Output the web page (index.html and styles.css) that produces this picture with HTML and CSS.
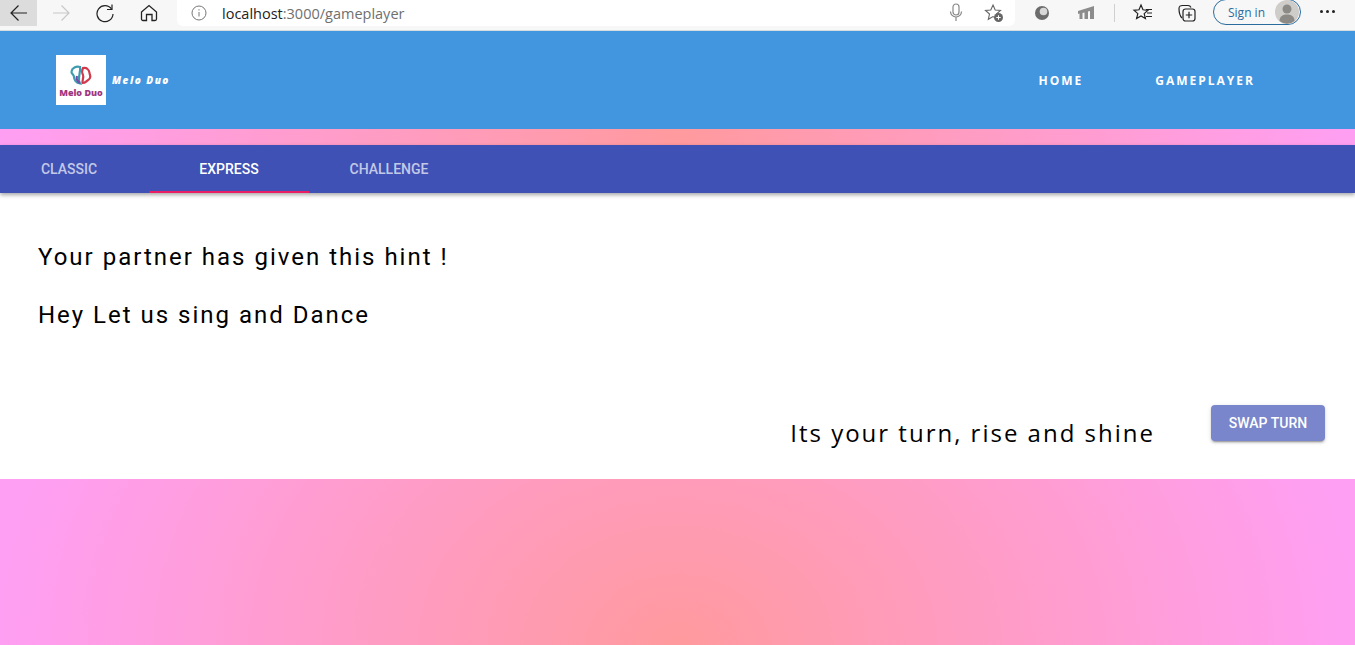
FILE: index.html
```html
<!DOCTYPE html>
<html lang="en">
<head>
<meta charset="UTF-8" />
<meta name="viewport" content="width=device-width, initial-scale=1" />
<title>Melo Duo - Gameplayer</title>
<link rel="stylesheet" href="styles.css">
</head>
<body>
<div class="browser-bar">
  <div class="tool tool-back">
    <svg width="20" height="20" viewBox="0 0 20 20" fill="none" stroke="#222" stroke-width="1.2"><path d="M18 10H2M9.5 2.5 2 10l7.5 7.5"/></svg>
  </div>
  <div class="tool tool-fwd">
    <svg width="20" height="20" viewBox="0 0 20 20" fill="none" stroke="#c8c8c8" stroke-width="1.2"><path d="M2 10h16M10.500 2.500 18 10l-7.500 7.500"/></svg>
  </div>
  <div class="tool">
    <svg width="20" height="20" viewBox="0 0 20 20" fill="none" stroke="#222" stroke-width="1.2"><path d="M16.500 6A8 8 0 1 0 18 11"/><path d="M17 1.500V6.500H12"/></svg>
  </div>
  <div class="tool">
    <svg width="20" height="20" viewBox="0 0 20 20" fill="none" stroke="#222" stroke-width="1.3"><path d="M2.500 9 10 2.500 17.500 9v7a1.500 1.500 0 0 1-1.500 1.500h-3V11.500H7.500v6H4A1.500 1.500 0 0 1 2.500 16z"/></svg>
  </div>
  <div class="address">
    <svg class="addr-info" width="16" height="16" viewBox="0 0 16 16" fill="none" stroke="#777" stroke-width="1"><circle cx="8" cy="8" r="7"/><path d="M8 7v4.500M8 4.200v1.300"/></svg>
    <span class="url"><span class="url-host">localhost</span>:3000/gameplayer</span>
    <svg class="addr-mic" width="16" height="20" viewBox="0 0 16 20" fill="none" stroke="#888" stroke-width="1.2"><rect x="5" y="1" width="6" height="11" rx="3"/><path d="M2.500 8.500a5.500 5.500 0 0 0 11 0M8 14v4"/></svg>
    <svg class="addr-star" width="20" height="20" viewBox="0 0 20 20"><path d="M9 2l2.200 5 5.300.5-4 3.500 1.200 5.300L9 13.600 4.300 16.300 5.500 11l-4-3.500L6.800 7z" fill="none" stroke="#666" stroke-width="1.100"/><circle cx="14.500" cy="14.500" r="4.500" fill="#666"/><path d="M12.300 14.500h4.400M14.500 12.300v4.400" stroke="#fff" stroke-width="1"/></svg>
  </div>
  <div class="tool tool-first">
    <svg width="20" height="20" viewBox="0 0 20 20"><circle cx="10" cy="10" r="7" fill="#6c6c6c"/><circle cx="11.500" cy="8.500" r="3.800" fill="#d8d8d8"/></svg>
  </div>
  <div class="tool">
    <svg width="20" height="20" viewBox="0 0 20 20" fill="#8c8c8c"><path d="M2 8l16-5v13h-4V8l-2 .6V16H8.500V9.500L6.500 10v6H3.500v-5.500L2 11z"/></svg>
  </div>
  <div class="tool-sep"></div>
  <div class="tool">
    <svg width="22" height="20" viewBox="0 0 22 20" fill="none" stroke="#222" stroke-width="1.200"><path d="M9 2l2 4.800 5 .5-3.800 3.300 1.200 5L9 13 4.600 15.600l1.200-5L2 7.300l5-.5z"/><path d="M14 6.500h6M15 10h5M14 13.500h6"/></svg>
  </div>
  <div class="tool">
    <svg width="20" height="20" viewBox="0 0 20 20" fill="none" stroke="#222" stroke-width="1.200"><path d="M5 15C3 13 2 8 2 5.500 2 3.500 3.500 2.500 5.500 2.500H11c1.500 0 2.500.8 3 2"/><rect x="6" y="6" width="12" height="12" rx="2.500"/><path d="M12 8.800v6.400M8.800 12h6.400"/></svg>
  </div>
  <div class="signin">
    <span>Sign in</span>
    <svg class="avatar" width="24" height="24" viewBox="0 0 24 24"><circle cx="12" cy="12" r="12" fill="#cfcdca"/><circle cx="12" cy="9" r="4.500" fill="#8c8a87"/><path d="M4.500 21c0-5 3.500-6.500 7.500-6.500s7.500 1.500 7.500 6.500a12 12 0 0 1-15 0z" fill="#8c8a87"/></svg>
  </div>
  <div class="tool-more"><i></i><i></i><i></i></div>
</div>

<header class="app-header">
  <div class="logo-box">
    <svg width="24" height="22" viewBox="0 0 24 22" fill="none" stroke-width="2.200">
      <path d="M11 2C7 1 3 3 2.500 6.500 2 9 5 9.500 5 12s2 6 6 6.500C8 14 12 7 11 2z" stroke="#3f9cb0"/>
      <path d="M8 11c-1 3 .5 5.500 3 7" stroke="#7a4bab"/>
      <path d="M14 3c-1.500 3-1 5 0 7s-1 6-.5 8c3 0 3.500-1.500 5-2.500s3.500-3 2.500-5.500 0-4-2.500-6c-1.500-1.500-3-1-4.500-1z" stroke="#d23a4c"/>
    </svg>
    <span class="logo-box-text">Melo Duo</span>
  </div>
  <span class="brand">Melo Duo</span>
  <nav class="main-nav">
    <a href="#">Home</a>
    <a href="#">Gameplayer</a>
  </nav>
</header>

<div class="strip"></div>

<div class="tabs">
  <div class="tab">Classic</div>
  <div class="tab active">Express</div>
  <div class="tab">Challenge</div>
</div>

<main class="game">
  <h5 class="hint">Your partner has given this hint !</h5>
  <h5 class="hint">Hey Let us sing and Dance</h5>
  <div class="turn-row">
    <span class="turn-text">Its your turn, rise and shine</span>
    <button class="swap-btn">Swap Turn</button>
  </div>
</main>

<div class="page-bottom"></div>
</body>
</html>
```

FILE: styles.css
```css
html, body {
  margin: 0;
  padding: 0;
  height: 100%;
}
body {
  display: flex;
  flex-direction: column;
  height: 645px;
  overflow: hidden;
  font-family: Roboto, sans-serif;
  background: #fff;
}

/* browser chrome */
.browser-bar {
  display: flex;
  align-items: flex-start;
  height: 30px;
  flex: none;
  background: #f7f7f7;
  border-bottom: 1px solid #d4dce4;
}
.tool {
  width: 44px;
  height: 26px;
  display: flex;
  align-items: center;
  justify-content: center;
  flex: none;
}
.tool-back {
  width: 37px;
  background: #dcdcdc;
}
.tool-fwd {
  margin-left: 2px;
}
.tool-first {
  margin-left: 5px;
}
.tool-sep {
  width: 1px;
  height: 18px;
  margin: 4px 6px 0;
  background: #d0d0d0;
}
.address {
  display: flex;
  align-items: center;
  width: 838px;
  height: 26px;
  margin-left: 6px;
  background: #fff;
  border-radius: 0 0 6px 6px;
  flex: none;
}
.addr-info {
  margin-left: 14px;
}
.url {
  margin-left: 15px;
  font-family: "Open Sans", sans-serif;
  font-size: 14.500px;
  color: #6f6f6f;
}
.url-host {
  color: #222;
}
.addr-mic {
  margin-left: auto;
}
.addr-star {
  margin: 0 11px 0 20px;
}
.signin {
  display: flex;
  align-items: center;
  justify-content: space-between;
  box-sizing: border-box;
  width: 88px;
  height: 26px;
  margin: -1px 0 0 4px;
  padding: 0 1px 0 14px;
  border: 1px solid #2a6c9e;
  border-radius: 14px;
  font-family: "Open Sans", sans-serif;
  font-size: 12px;
  color: #2a6c9e;
}
.tool-more {
  display: flex;
  gap: 3px;
  justify-content: center;
  width: 52px;
  margin-top: 10px;
}
.tool-more i {
  width: 3px;
  height: 3px;
  border-radius: 50%;
  background: #222;
}

/* app header */
.app-header {
  display: flex;
  align-items: center;
  flex: none;
  height: 98px;
  padding: 0 100px 0 56px;
  background: #4296e0;
  color: #fff;
}
.logo-box {
  display: flex;
  flex-direction: column;
  align-items: center;
  justify-content: center;
  width: 50px;
  height: 50px;
  padding-top: 4px;
  box-sizing: border-box;
  background: #fff;
}
.logo-box-text {
  font-family: "Open Sans", sans-serif;
  font-size: 9px;
  font-weight: 800;
  line-height: 12px;
  white-space: nowrap;
  color: #a0367f;
}
.brand {
  margin-left: 6px;
  font-family: "Open Sans", sans-serif;
  font-size: 10px;
  font-weight: 800;
  font-style: italic;
  letter-spacing: 1.500px;
}
.main-nav {
  display: flex;
  gap: 72px;
  margin-left: auto;
}
.main-nav a {
  font-family: "Open Sans", sans-serif;
  font-size: 12px;
  font-weight: 700;
  letter-spacing: 2px;
  text-transform: uppercase;
  text-decoration: none;
  color: #fff;
}

/* gradient bits */
.strip {
  height: 16px;
  flex: none;
  background: linear-gradient(90deg, #ff9ff3, #ff9a9e 50%, #ff9ff3);
}
.page-bottom {
  height: 166px;
  flex: none;
  background: radial-gradient(ellipse 680px 520px at 50% 100%, #ff9a9e, #ff9ff3);
}

/* tabs */
.tabs {
  display: flex;
  flex: none;
  height: 48px;
  padding-left: 0;
  background: #3f51b5;
  box-shadow: 0 2px 4px rgba(0,0,0,0.35);
  position: relative;
}
.tab {
  display: flex;
  align-items: center;
  justify-content: center;
  box-sizing: border-box;
  width: 160px;
  font-size: 14px;
  font-weight: 500;
  text-transform: uppercase;
  color: rgba(255,255,255,0.7);
}
.tab:first-child {
  margin-left: -11px;
}
.tab.active {
  color: #fff;
  border-bottom: 2px solid #e91e63;
  padding-top: 2px;
}

/* game area */
.game {
  display: flex;
  flex-direction: column;
  flex: 1;
  padding: 48px 30px 30px 38px;
}
.hint {
  margin: 0 0 26px;
  font-size: 24px;
  font-weight: 400;
  line-height: 32px;
  letter-spacing: 2px;
  color: #000;
}
.turn-row {
  display: flex;
  align-items: center;
  justify-content: flex-end;
  gap: 56px;
  margin-top: auto;
}
.turn-text {
  margin-top: 20px;
  font-family: "Open Sans", sans-serif;
  font-size: 24px;
  letter-spacing: 2px;
  color: #000;
}
.swap-btn {
  width: 114px;
  height: 36px;
  border: none;
  border-radius: 4px;
  background: #7986cb;
  box-shadow: 0 3px 1px -2px rgba(0,0,0,0.2), 0 2px 2px 0 rgba(0,0,0,0.14), 0 1px 5px 0 rgba(0,0,0,0.12);
  font-family: Roboto, sans-serif;
  font-size: 14px;
  font-weight: 500;
  text-transform: uppercase;
  color: #fff;
}
```
